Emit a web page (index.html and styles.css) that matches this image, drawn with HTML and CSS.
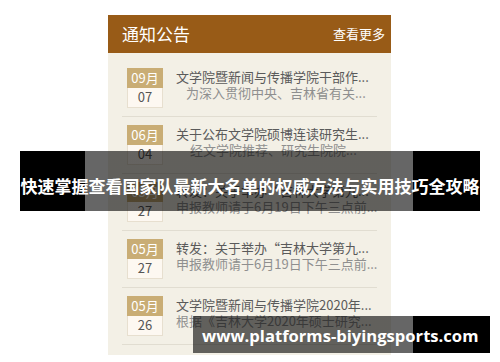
FILE: index.html
```html
<!DOCTYPE html>
<html lang="zh-CN">
<head>
<meta charset="utf-8">
<title>通知公告</title>
<link rel="stylesheet" href="styles.css">
</head>
<body>
<div class="panel">
  <div class="panel-head">
    <span class="panel-title">通知公告</span>
    <span class="panel-more">查看更多</span>
  </div>
  <ul class="list">
    <li class="row">
      <div class="date"><div class="month">09月</div><div class="day">07</div></div>
      <div class="text">
        <div class="t">文学院暨新闻与传播学院干部作...</div>
        <div class="s ind1">为深入贯彻中央、吉林省有关...</div>
      </div>
    </li>
    <li class="row">
      <div class="date"><div class="month">06月</div><div class="day">04</div></div>
      <div class="text">
        <div class="t">关于公布文学院硕博连读研究生...</div>
        <div class="s ind2">经文学院推荐、研究生院院...</div>
      </div>
    </li>
    <li class="row">
      <div class="date"><div class="month">05月</div><div class="day">27</div></div>
      <div class="text">
        <div class="t">转发：关于举办“吉林大学第九...</div>
        <div class="s">申报教师请于6月19日下午三点前...</div>
      </div>
    </li>
    <li class="row">
      <div class="date"><div class="month">05月</div><div class="day">27</div></div>
      <div class="text">
        <div class="t">转发：关于举办“吉林大学第九...</div>
        <div class="s">申报教师请于6月19日下午三点前...</div>
      </div>
    </li>
    <li class="row">
      <div class="date"><div class="month">05月</div><div class="day">26</div></div>
      <div class="text">
        <div class="t">文学院暨新闻与传播学院2020年...</div>
        <div class="s">根据《吉林大学2020年硕士研究...</div>
      </div>
    </li>
  </ul>
</div>
<div class="banner"><span class="banner-text">快速掌握查看国家队最新大名单的权威方法与实用技巧全攻略</span></div>
<div class="url">www.platforms-biyingsports.com</div>
</body>
</html>
```

FILE: styles.css
```css
* { box-sizing: border-box; }
html, body { margin: 0; padding: 0; background: #fff; }
body {
  width: 500px;
  height: 362px;
  overflow: hidden;
  position: relative;
  font-family: "Noto Sans CJK SC", "Noto Sans", sans-serif;
}
.panel {
  margin: 15px 0 0 108px;
  width: 283px;
  background: #f3f0e6;
  padding-bottom: 10px;
}
.panel-head {
  height: 38px;
  background: #985b17;
  display: flex;
  align-items: center;
  justify-content: space-between;
  padding: 0 6px 0 14px;
  color: #fff;
}
.panel-title { font-size: 17px; line-height: 20px; }
.panel-more { font-size: 13px; line-height: 16px; }
.list {
  list-style: none;
  margin: 0;
  padding: 7px 14px 0;
}
.row {
  display: flex;
  gap: 13px;
  padding: 8px 0 8px 5px;
  border-bottom: 1px solid #e1ddd1;
}
.date {
  width: 36px;
  flex: none;
  text-align: center;
  font-size: 13px;
}
.month {
  height: 20px;
  line-height: 20px;
  background: #c9ad75;
  color: #fff;
}
.day {
  height: 20px;
  line-height: 18px;
  background: #fdf8f1;
  border: 1px solid #e7dfcf;
  border-top: none;
  color: #555;
}
.text {
  padding-top: 1px;
  font-size: 13px;
  line-height: 16px;
  white-space: nowrap;
  overflow: hidden;
}
.t { color: #5a5a5a; }
.s { color: #8f8f8f; }
.ind1 { padding-left: 10px; }
.ind2 { padding-left: 14px; }
.banner {
  position: absolute;
  left: 20px;
  top: 151px;
  width: 460px;
  height: 60px;
  background: linear-gradient(to right, #000 0, #000 65px, rgba(0,0,0,0.6) 65px, rgba(0,0,0,0.6) 393px, #000 393px);
  display: flex;
  align-items: center;
  justify-content: center;
  padding-top: 10px;
}
.banner-text {
  color: #fff;
  font-weight: bold;
  font-size: 17px;
  line-height: 22px;
  white-space: nowrap;
}
.url {
  position: absolute;
  left: 193px;
  top: 316px;
  width: 297px;
  height: 37px;
  background: linear-gradient(to right, rgba(0,0,0,0.6) 0, rgba(0,0,0,0.6) 220px, #000 220px);
  color: #fff;
  font-family: "Open Sans", "DejaVu Sans", sans-serif;
  font-weight: bold;
  font-size: 16.6px;
  display: flex;
  align-items: center;
  padding: 2px 0 0 9px;
  white-space: nowrap;
}
```
